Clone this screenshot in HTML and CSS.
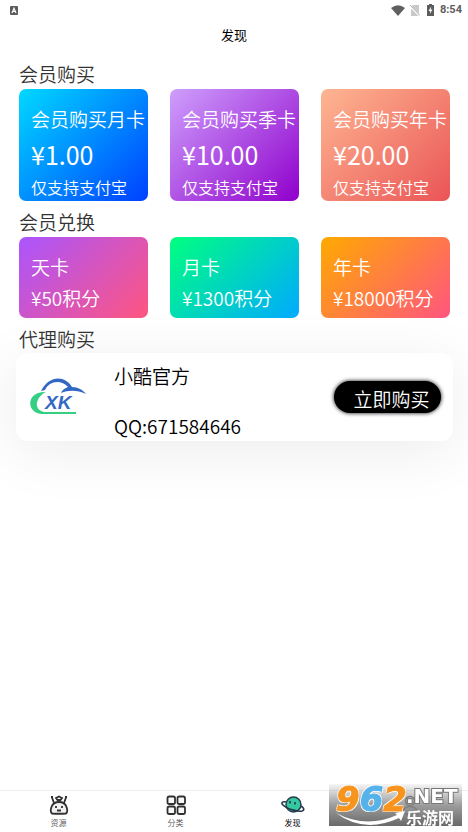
FILE: index.html
```html
<!DOCTYPE html>
<html lang="zh-CN">
<head>
<meta charset="utf-8">
<meta name="viewport" content="width=device-width, initial-scale=1">
<title>发现</title>
<link rel="stylesheet" href="styles.css">
</head>
<body>
<div class="status">
  <svg class="status-app" width="8" height="9" viewBox="0 0 8 9"><rect width="8" height="9" rx="1" fill="#5c5c5c"/><path d="M2 7 4 2.200 6 7M2.800 5.500H5.200" fill="none" stroke="#fff" stroke-width="1.200"/></svg>
  <svg width="14" height="11" viewBox="0 0 14 11"><path d="M0 3Q7-2.500 14 3L7 11Z" fill="#606060"/></svg>
  <svg class="status-sim" width="10" height="11" viewBox="0 0 10 11"><path d="M3 0H9V11H1V3Z" fill="#c9c9c9"/><path d="M0 1 10 11" stroke="#fff" stroke-width="2"/><path d="M0 0 10 10.500" stroke="#aaa" stroke-width="1"/></svg>
  <svg class="status-battery" width="7" height="12" viewBox="0 0 7 12"><path d="M2 0H5V1H7V12H0V1H2Z" fill="#5c5c5c"/><path d="M4.200 2.500 1.500 7H3.200L2.800 10 5.500 5.500H3.800Z" fill="#fff"/></svg>
  <time>8:54</time>
</div>
<header class="title"><h1>发现</h1></header>
<main>
  <section>
    <h2>会员购买</h2>
    <div class="plans">
      <button class="plan blue"><span class="name">会员购买月卡</span><span class="price">¥1.00</span><span class="note">仅支持支付宝</span></button>
      <button class="plan purple"><span class="name">会员购买季卡</span><span class="price">¥10.00</span><span class="note">仅支持支付宝</span></button>
      <button class="plan coral"><span class="name">会员购买年卡</span><span class="price">¥20.00</span><span class="note">仅支持支付宝</span></button>
    </div>
  </section>
  <section>
    <h2>会员兑换</h2>
    <div class="plans">
      <button class="plan short violet"><span class="name">天卡</span><span class="points">¥50积分</span></button>
      <button class="plan short green"><span class="name">月卡</span><span class="points">¥1300积分</span></button>
      <button class="plan short orange"><span class="name">年卡</span><span class="points">¥18000积分</span></button>
    </div>
  </section>
  <section class="agents">
    <h2>代理购买</h2>
    <article class="agent">
      <svg class="logo" width="56" height="38" viewBox="0 0 56 38" role="img" aria-label="XK">
        <path d="M11 13C19-3 35-3 42 9C48 9 53 12 56 16C47 12 39 12 31 15C32 12 35 10 38 9C31 1 19 3 15 12Z" fill="#3268c4"/>
        <path d="M16 14C3 13-3 23 2 31C4 34 8 36 14 36H46V34H15C3 33 5 19 16 14Z" fill="#35cf83"/>
        <text class="logo-text" x="15" y="31">XK</text>
      </svg>
      <div class="agent-info"><span>小酷官方</span><span>QQ:671584646</span></div>
      <button class="buy">立即购买</button>
    </article>
  </section>
</main>
<nav class="tabs">
  <a href="#resources">
    <svg width="20" height="20" viewBox="0 0 20 20" fill="none" stroke="#303030" stroke-width="1.800"><path d="M3 18.500C1 17 1 7 10 7S19 17 17 18.500Q10 19 3 18.500Z" fill="#f1f1f1"/><path d="M5 8 3 2.500M15 8 17 2.500M7 3 8.500 5H11.500L13 3 10 1.500Z"/><path d="M2 2H4M16 2H18M7 11V13M13 11V13M8 15.500H12"/></svg>
    <span>资源</span></a>
  <a href="#categories">
    <svg width="20" height="20" viewBox="0 0 20 20" fill="#f8f8f8" stroke="#303030" stroke-width="1.800"><rect x="1.500" y="1.500" width="7.500" height="7.500" rx="1.800"/><rect x="11.500" y="1.500" width="7.500" height="7.500" rx="1.800"/><rect x="1.500" y="11.500" width="7.500" height="7.500" rx="1.800"/><rect x="11.500" y="11.500" width="7.500" height="7.500" rx="1.800"/></svg>
    <span>分类</span></a>
  <a href="#discover" class="active" aria-current="page">
    <svg width="24" height="20" viewBox="0 0 24 20" fill="none" stroke="#26394c" stroke-width="1.400"><circle cx="12.500" cy="9.500" r="7.500" fill="#34c9a0"/><path d="M5 7C1 6 0 8 2 10C6 14 17 17 21 16C24 15 23 13 20 11" stroke-width="1.600"/><path d="M9 6V8.500M14 7V9.500" stroke-width="1.600"/></svg>
    <span>发现</span></a>
  <a href="#mine" aria-label="我的">
    <svg width="20" height="20" viewBox="0 0 20 20" fill="none" stroke="#555" stroke-width="1.600"><circle cx="10" cy="6" r="4.500"/><path d="M2 19C2 9 18 9 18 19Z"/></svg>
  </a>
</nav>
<aside class="mark">
  <svg class="swoosh" width="72" height="15" viewBox="0 0 72 15"><path d="M0 2Q30 18 61 4L59 2 69 0 65 10 63 7Q28 23 0 2Z" fill="#fff"/></svg>
  <span class="digits"><b>9</b><b class="six">6</b><b>2</b></span>
  <span class="net">.NET</span>
  <span class="site">乐游网</span>
</aside>
</body>
</html>
```

FILE: styles.css
```css
* { box-sizing: border-box; }
body {
  margin: 0;
  min-height: 100vh;
  display: flex;
  flex-direction: column;
  background: #fff;
  color: #333;
  font-family: "Noto Sans CJK SC", sans-serif;
  font-weight: 350;
}
button {
  border: 0;
  font: inherit;
  color: #fff;
  cursor: pointer;
}
.status {
  display: flex;
  align-items: center;
  height: 20px;
  padding: 0 6px 0 10px;
  color: #606060;
}
.status-app { margin-right: auto; }
.status-sim { margin-left: 5px; }
.status-battery { margin: 0 6px 0 7px; }
.status time {
  font: bold 11px/20px Roboto, sans-serif;
}
.title { height: 44px; }
.title h1 {
  margin: 0;
  text-align: center;
  font-size: 13px;
  line-height: 30px;
  font-weight: 400;
  color: #000;
}
main { flex: 1; }
h2 {
  margin: 0;
  padding: 0 19px;
  font-size: 19px;
  line-height: 20px;
  font-weight: 350;
}
section { margin-bottom: 11px; }
.plans {
  display: grid;
  grid-template-columns: repeat(3, minmax(0, 1fr));
  gap: 22px;
  padding: 5px 18px 0 19px;
}
.plan {
  display: flex;
  flex-direction: column;
  align-items: flex-start;
  height: 112px;
  padding: 16px 0 0 12px;
  border-radius: 7px;
  white-space: nowrap;
  text-align: left;
}
.short { height: 81px; }
.name, .points { font-size: 19px; line-height: 28px; }
.points { margin-top: 3px; }
.price { font-size: 25px; line-height: 42px; font-weight: 400; }
.note { font-size: 16px; line-height: 24px; }
.blue { background: linear-gradient(135deg, #00d9ff, #0040ff); }
.purple { background: linear-gradient(135deg, #ce9ffc, #9000cc); }
.coral { background: linear-gradient(135deg, #feb692, #ea5455); }
.violet { background: linear-gradient(135deg, #aa55ff, #ff557f); }
.green { background: linear-gradient(135deg, #00ff7f, #00aaff); }
.orange { background: linear-gradient(135deg, #ffaa00, #ff557f); }
.agent {
  display: flex;
  align-items: center;
  height: 88px;
  margin: 4px 15px 0 16px;
  padding: 0 12px 0 14px;
  border-radius: 12px;
  background: #fff;
  box-shadow: 0 10px 60px rgba(0, 0, 0, .08);
  color: #000;
}
/* Keeps the card's wide shadow behind the plans above it. */
.agents, .agent { position: relative; }
.agents { z-index: -1; }
.logo { margin-right: 28px; }
.logo-text {
  font: italic bold 19px "Liberation Sans", sans-serif;
  fill: #3268c4;
}
.agent-info {
  display: flex;
  flex-direction: column;
  gap: 22px;
  padding-top: 8px;
  font-size: 19px;
  line-height: 28px;
}
.buy {
  margin-left: auto;
  width: 107px;
  height: 32px;
  padding: 4px 0 0 8px;
  border-radius: 16px;
  background: #000;
  box-shadow: 0 0 4px #000;
  font-size: 19px;
  line-height: 28px;
}
.tabs {
  display: flex;
  height: 42px;
  border-top: 1px solid #eee;
}
.tabs a {
  flex: 1;
  display: flex;
  flex-direction: column;
  align-items: center;
  padding-top: 4px;
  font-size: 8px;
  line-height: 16px;
  color: #555;
  text-decoration: none;
}
.tabs .active { color: #000; font-weight: 400; }
.mark {
  position: fixed;
  right: 6px;
  bottom: 6px;
  width: 133px;
  height: 42px;
  background: linear-gradient(rgba(170, 170, 170, .1), rgba(140, 140, 140, .85) 50%, #696969);
  color: #fff;
  line-height: 1;
}
.mark > * { position: absolute; }
.digits {
  left: 7px;
  top: -2px;
  font: italic bold 34px/34px "DejaVu Sans", sans-serif;
  color: #f7941d;
  -webkit-text-stroke: 1px currentColor;
  text-shadow: 1px 1px #fff, -1px -1px #fff, 1px -1px #fff, -1px 1px #fff;
}
.six { color: #55b2ea; }
.net {
  left: 77px;
  top: 2px;
  font: bold 20px/20px "DejaVu Sans", sans-serif;
  -webkit-text-stroke: 2px #777;
  paint-order: stroke fill;
}
.site {
  left: 77px;
  top: 25px;
  font-size: 16px;
  font-weight: 700;
}
.swoosh { left: 7px; top: 27px; }
```
